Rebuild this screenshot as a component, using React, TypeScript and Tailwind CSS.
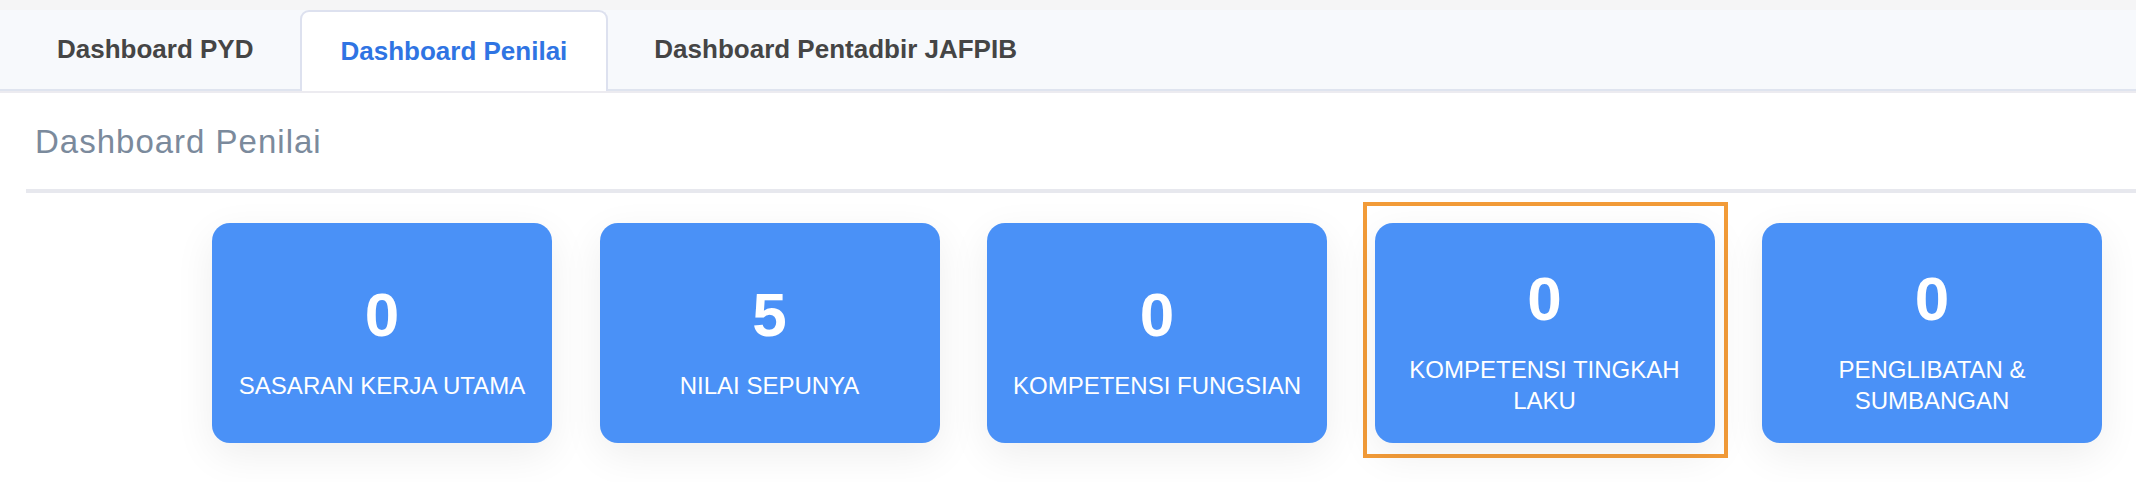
import React from "react";

const cards = [
  { value: "0", label: ["SASARAN KERJA UTAMA"] },
  { value: "5", label: ["NILAI SEPUNYA"] },
  { value: "0", label: ["KOMPETENSI FUNGSIAN"] },
  { value: "0", label: ["KOMPETENSI TINGKAH", "LAKU"], highlight: true },
  { value: "0", label: ["PENGLIBATAN &", "SUMBANGAN"] },
];

function Card({ value, label, highlight }: { value: string; label: string[]; highlight?: boolean }) {
  return (
    <div className="relative w-[340px] h-[220px] shrink-0">
      {highlight && (
        <div className="absolute -left-[12px] -top-[21px] -right-[13px] -bottom-[15px] border-[4px] border-[#f29b38]" />
      )}
      <div className="relative w-full h-full rounded-[18px] bg-[#4a91f7] shadow-[0_12px_40px_rgba(0,0,0,0.07)] flex flex-col items-center justify-center pt-[14px] text-white">
        <div className="text-[62px] font-bold leading-[70px]">{value}</div>
        <div className="mt-[20px] text-[24px] leading-[31px] text-center">
          {label.map((l, i) => (
            <div key={i}>{l}</div>
          ))}
        </div>
      </div>
    </div>
  );
}

export default function App() {
  return (
    <div className="w-[2136px] h-[482px] bg-white overflow-hidden font-['Liberation_Sans',Arial,sans-serif]">
      <div className="h-[10px] bg-[#f5f5f6]" />
      <div className="h-[81px] bg-[#f7f9fc] border-b-[2px] border-[#dfe4ef] flex items-stretch pl-[15px] gap-[4px]">
        <div className="px-[42px] flex items-center text-[26px] font-bold text-[#454545]">Dashboard PYD</div>
        <div className="px-[39px] flex items-center text-[26px] font-bold text-[#2f74e3] bg-white border-[2px] border-b-0 border-[#dde1ef] rounded-t-[9px] -mb-[2px]">
          Dashboard Penilai
        </div>
        <div className="px-[42px] flex items-center text-[26px] font-bold text-[#454545]">Dashboard Pentadbir JAFPIB</div>
      </div>
      <div className="h-[2px] bg-[#ecebf0]" />
      <div className="ml-[26px]">
        <div className="pt-[28px] pl-[9px] text-[33px] leading-[41px] tracking-[1px] text-[#7b8a9c]">Dashboard Penilai</div>
        <div className="mt-[27px] h-[4px] bg-[#e7e8ee]" />
        <div className="mt-[30px] pl-[186px] flex gap-[47.5px]">
          {cards.map((c, i) => (
            <Card key={i} {...c} />
          ))}
        </div>
      </div>
    </div>
  );
}
